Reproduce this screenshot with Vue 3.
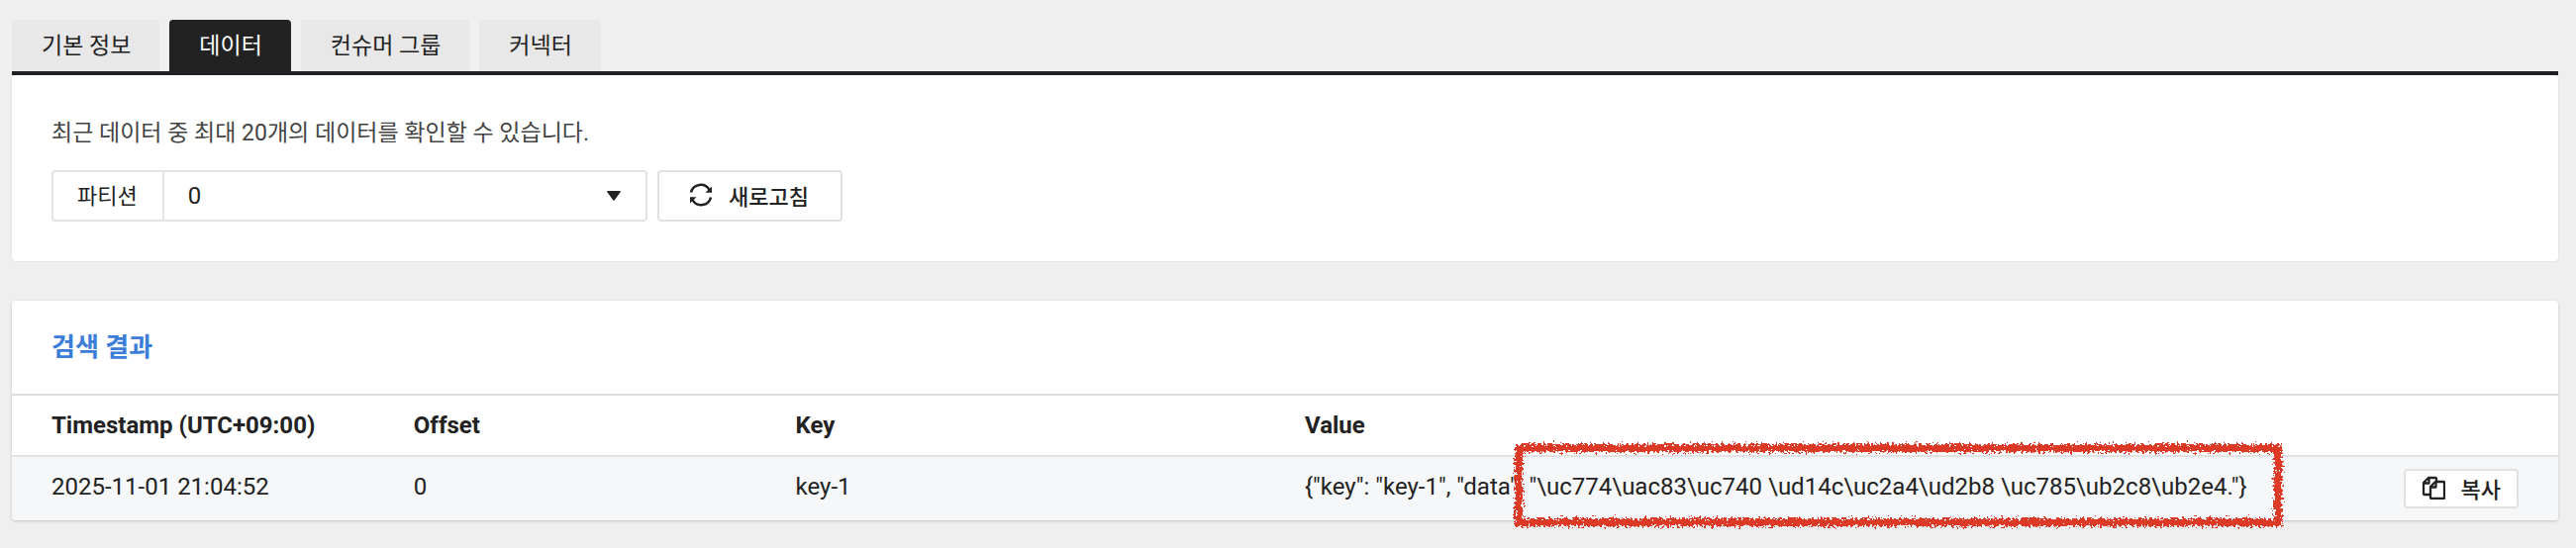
<template>
  <main class="topic-page">
    <nav class="tabs">
      <button
        v-for="tab in tabs"
        :key="tab"
        type="button"
        class="tab"
        :class="{ active: tab === activeTab }"
        @click="activeTab = tab"
      >{{ tab }}</button>
    </nav>

    <section class="card search-card">
      <p class="guide">최근 데이터 중 최대 20개의 데이터를 확인할 수 있습니다.</p>
      <div class="toolbar">
        <div class="field">
          <label class="field-label" for="partition">파티션</label>
          <div class="select-wrap">
            <select id="partition" v-model="partition">
              <option v-for="p in partitions" :key="p" :value="p">{{ p }}</option>
            </select>
            <svg class="caret" viewBox="0 0 14 10" aria-hidden="true">
              <path d="M1 0H13Q14.4 0 13.6 1.2L8 9Q7 10.4 6 9L0.4 1.2Q-0.4 0 1 0Z" fill="#222" />
            </svg>
          </div>
        </div>
        <button type="button" class="btn refresh">
          <svg class="icon" viewBox="0 0 24 24" aria-hidden="true">
            <path d="M2 9.500A10 10 0 0 1 20.500 7M22 14.500A10 10 0 0 1 3.500 17" fill="none" stroke="#222" stroke-width="2.500" />
            <path d="M23 3.500V9.800H16.500ZM1 20.500V14.200H7.500Z" fill="#222" />
          </svg>
          새로고침
        </button>
      </div>
    </section>

    <section class="card result-card">
      <h2 class="title">검색 결과</h2>
      <table class="result-table">
        <thead>
          <tr>
            <th class="col-time">Timestamp (UTC+09:00)</th>
            <th class="col-offset">Offset</th>
            <th class="col-key">Key</th>
            <th class="col-value">Value</th>
            <th class="col-action"></th>
          </tr>
        </thead>
        <tbody>
          <tr v-for="row in rows" :key="row.offset">
            <td>{{ row.timestamp }}</td>
            <td>{{ row.offset }}</td>
            <td>{{ row.key }}</td>
            <td>{{ row.head }} <span class="marked">{{ row.escaped }}<svg class="marker" aria-hidden="true">
              <defs>
                <filter id="crayon" filterUnits="userSpaceOnUse" x="-10" y="-10" width="2000" height="200" color-interpolation-filters="sRGB">
                  <feTurbulence type="fractalNoise" baseFrequency="0.4" numOctaves="2" seed="4" result="noise" />
                  <feDisplacementMap in="SourceGraphic" in2="noise" scale="11" xChannelSelector="R" yChannelSelector="G" />
                </filter>
              </defs>
              <g filter="url(#crayon)">
                <rect width="100%" height="100%" fill="none" stroke="#dc3a26" stroke-width="8" />
              </g>
            </svg></span></td>
            <td class="action">
              <button type="button" class="btn copy">
                <svg class="icon" viewBox="0 0 24 24" aria-hidden="true">
                  <path d="M9 19H3Q2 19 2 18V7L7 2H14Q15 2 15 3V6M2 7.500H7.500V2M9 11L14 6H22Q23 6 23 7V22Q23 23 22 23H10Q9 23 9 22ZM9 11.500H14.500V6" fill="none" stroke="#222" stroke-width="2.300" stroke-linejoin="round" />
                </svg>
                복사
              </button>
            </td>
          </tr>
        </tbody>
      </table>
    </section>
  </main>
</template>

<script setup>
import { ref } from 'vue'

const tabs = ['기본 정보', '데이터', '컨슈머 그룹', '커넥터']
const activeTab = ref('데이터')

const partitions = [0, 1, 2]
const partition = ref(0)

const rows = ref([
  {
    timestamp: '2025-11-01 21:04:52',
    offset: 0,
    key: 'key-1',
    head: '{"key": "key-1", "data":',
    escaped: '"\\uc774\\uac83\\uc740 \\ud14c\\uc2a4\\ud2b8 \\uc785\\ub2c8\\ub2e4."}'
  }
])
</script>

<style>
body {
  background: #efefef;
}
</style>

<style scoped>
.topic-page {
  padding: 20px 18px 28px 12px;
  color: #222;
  font-family: Roboto, "Noto Sans CJK KR", sans-serif;
  font-size: 24px;
}

button,
select {
  font-family: inherit;
  color: inherit;
  cursor: pointer;
}

.tabs {
  display: flex;
  gap: 10px;
  border-bottom: 4px solid #222024;
}

.tab {
  height: 52px;
  padding: 0 29px 4px 30px;
  border: 0;
  border-radius: 4px 4px 0 0;
  background: #e8e8e8;
  font-size: 23px;
}

.tab.active {
  background: #222;
  color: #fff;
}

.card {
  border-radius: 4px;
  background: #fff;
  box-shadow: 0 0 2px rgba(0, 0, 0, 0.16);
}

.search-card {
  padding: 42px 40px 40px;
}

.guide {
  margin: 0 0 20px;
  color: #444;
  font-size: 23px;
  line-height: 34px;
}

.toolbar {
  display: flex;
  gap: 10px;
}

.field {
  display: flex;
  box-sizing: border-box;
  width: 602px;
  height: 52px;
  border: 2px solid #e1e3e4;
  border-radius: 4px;
}

.field-label {
  display: flex;
  align-items: center;
  padding: 0 25px 4px 24px;
  border-right: 2px solid #e1e3e4;
  font-size: 22px;
}

.select-wrap {
  position: relative;
  flex: 1;
}

select {
  width: 100%;
  height: 100%;
  padding: 0 48px 0 24px;
  border: 0;
  background: transparent;
  font-size: 24px;
  appearance: none;
}

.caret {
  position: absolute;
  top: 19px;
  right: 25px;
  width: 14px;
  height: 10px;
  pointer-events: none;
}

.btn {
  display: inline-flex;
  align-items: center;
  justify-content: center;
  gap: 16px;
  border: 2px solid #e1e1e1;
  border-radius: 4px;
  background: #fff;
  font-size: 22px;
  font-weight: 500;
}

.refresh {
  height: 52px;
  padding: 0 32px 2px 30px;
}

.copy {
  height: 40px;
  padding: 0 16px 2px;
}

.icon {
  width: 24px;
  height: 24px;
}

.result-card {
  margin-top: 40px;
  box-shadow: 0 1px 3px rgba(0, 0, 0, 0.2);
}

.title {
  margin: 0;
  padding: 28px 40px;
  border-bottom: 2px solid #dcdddd;
  color: #3b7dd8;
  font-size: 26px;
  font-weight: 700;
  line-height: 38px;
}

.result-table {
  width: 100%;
  border-collapse: separate;
  border-spacing: 0;
  table-layout: fixed;
}

th,
td {
  box-sizing: border-box;
  padding: 0 0 0 20px;
  text-align: left;
  white-space: nowrap;
}

th {
  height: 62px;
  border-bottom: 2px solid #e0e2e3;
  font-weight: 700;
}

td {
  height: 64px;
  padding-bottom: 4px;
  background: #f6f7f9;
}

th:first-child,
td:first-child {
  padding-left: 40px;
}

td:first-child {
  border-bottom-left-radius: 4px;
}

td:last-child {
  border-bottom-right-radius: 4px;
}

.col-time,
.col-offset {
  width: 15%;
}

.col-key {
  width: 20%;
}

.col-value {
  width: 40%;
}

.col-action {
  width: 10%;
}

.action {
  padding: 0 40px 0 0;
  text-align: right;
}

.action .btn {
  vertical-align: middle;
}

.marked {
  position: relative;
  display: inline-block;
}

/* hand-drawn box around the escaped text */
.marker {
  position: absolute;
  top: -25px;
  left: -10px;
  width: calc(100% + 42px);
  height: 75px;
  overflow: visible;
  pointer-events: none;
}
</style>
